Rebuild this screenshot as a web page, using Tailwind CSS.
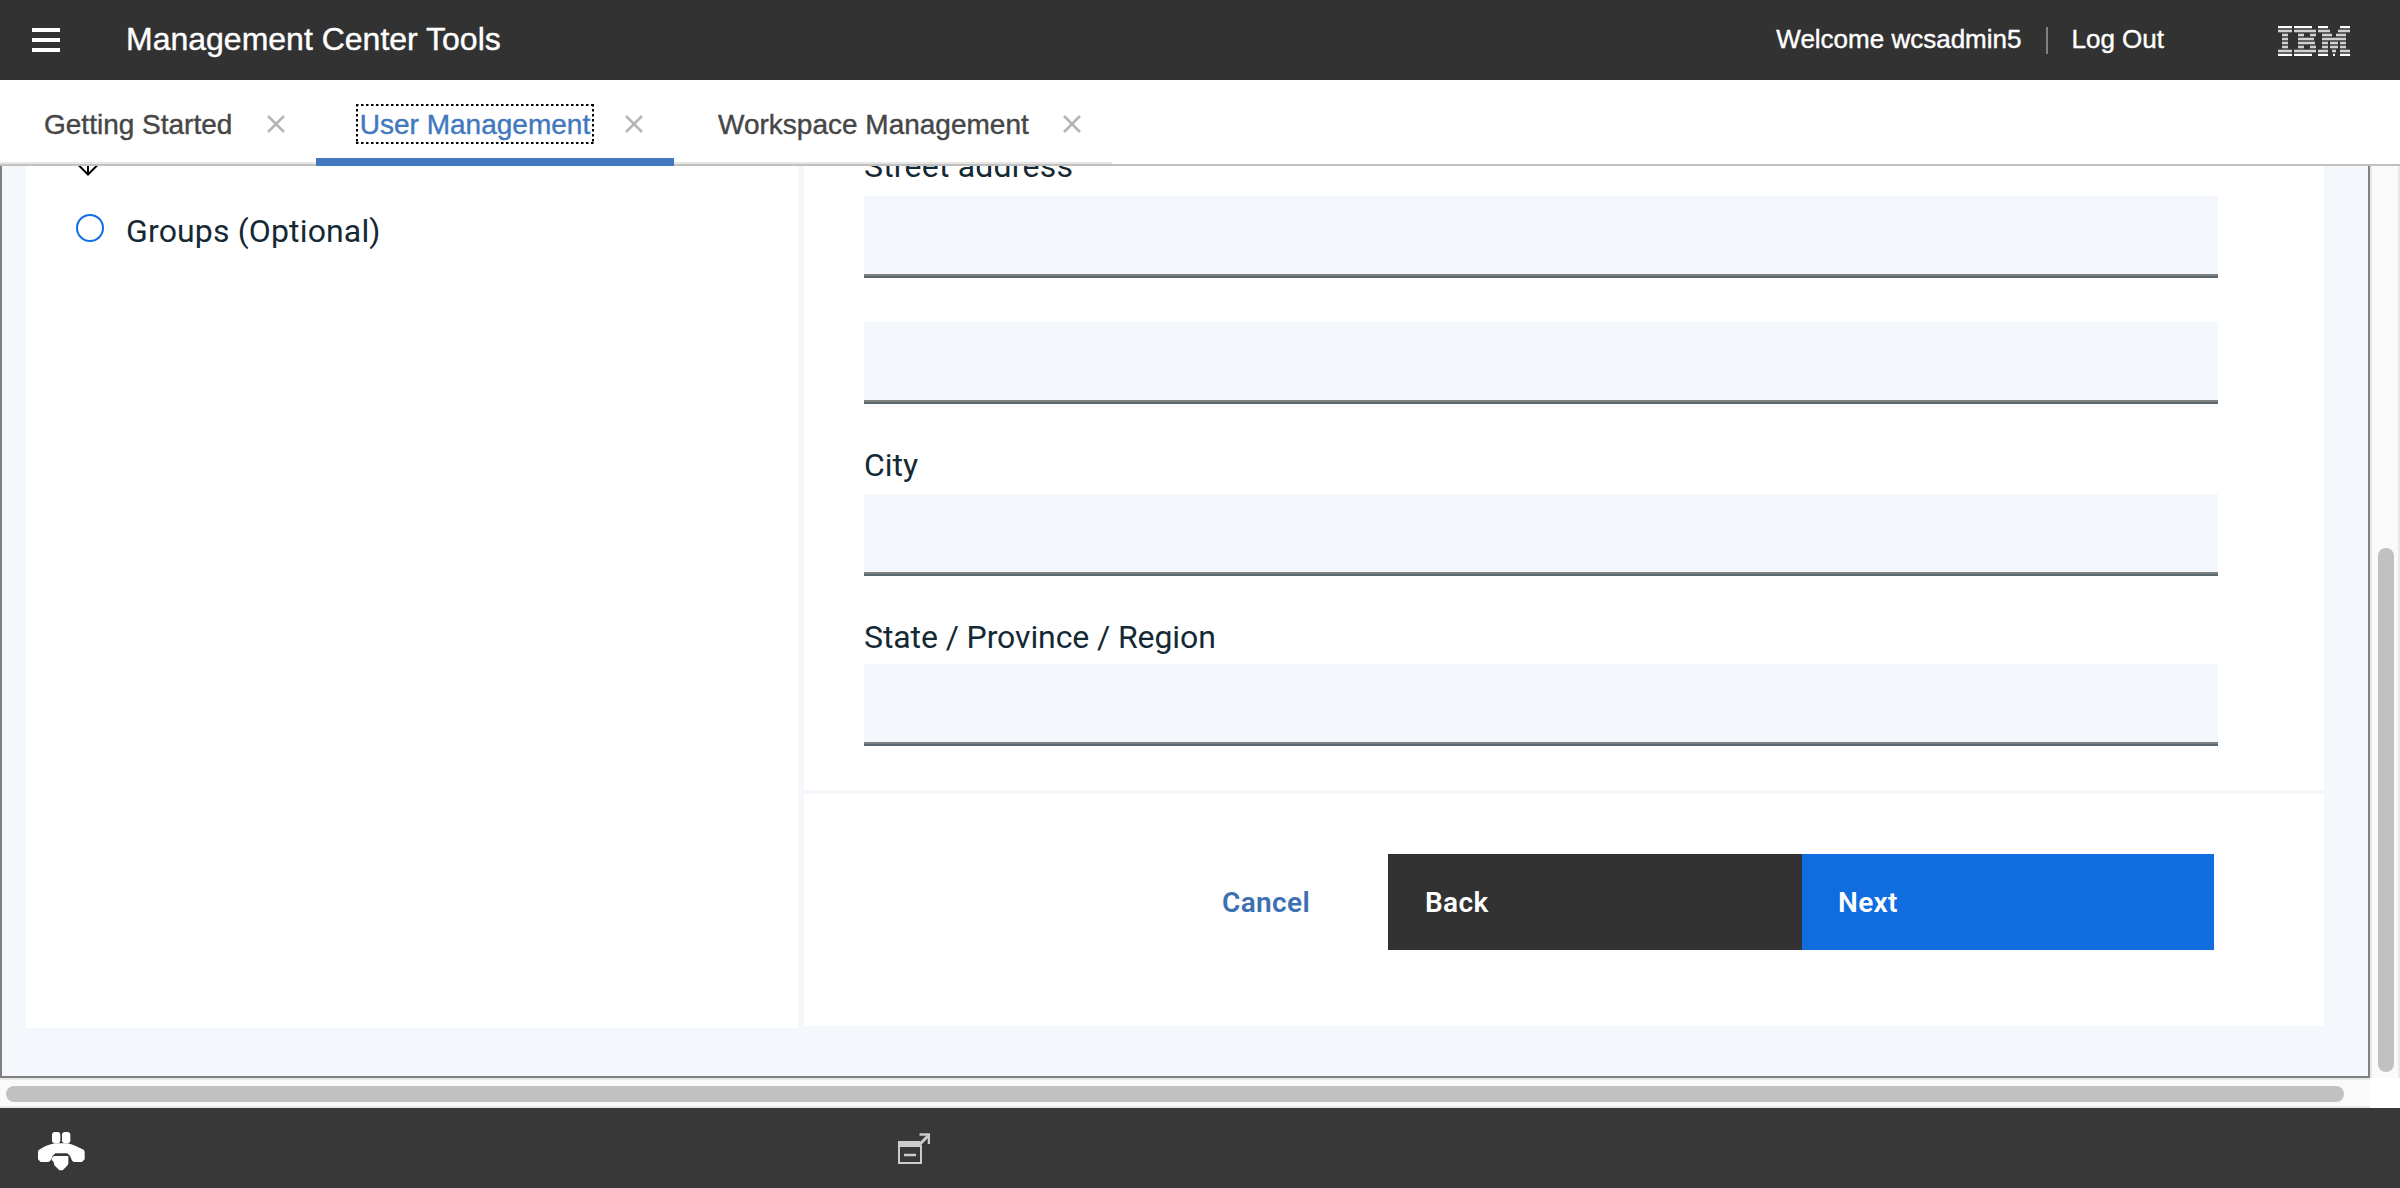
<!DOCTYPE html>
<html lang="en">
<head>
<meta charset="utf-8">
<title>Management Center Tools</title>
<script src="https://cdn.jsdelivr.net/npm/@tailwindcss/browser@4"></script>
</head>
<body class="w-[2400px] h-[1188px] overflow-hidden flex flex-col bg-white font-['Liberation_Sans',sans-serif]">
  <header class="h-20 shrink-0 bg-[#323232] text-white flex items-center [-webkit-text-stroke:0.4px]">
    <svg class="ml-8 w-7 h-6" viewBox="0 0 28 24" fill="#fff"><path d="M0 0h28v4H0zM0 10h28v4H0zM0 20h28v4H0z"/></svg>
    <h1 class="ml-[66px] text-[32px] leading-9 -mt-0.5 whitespace-nowrap">Management Center Tools</h1>
    <div class="ml-auto flex items-center text-[26px] leading-8 whitespace-nowrap">
      <span class="-mt-0.5">Welcome wcsadmin5</span>
      <span class="ml-[25px] w-0.5 h-[27px] bg-[#808080]"></span>
      <a class="ml-[23px] mr-px -mt-0.5">Log Out</a>
    </div>
    <svg class="ml-[113px] mr-[50px] mt-0.5 w-[72px] h-[30px]" viewBox="0 0 72 30" fill="none">
      <defs><path id="stripes" d="M0 1h14M16 1h18M40 1h10M62 1h10M0 5h14M16 5h22M40 5h12M60 5h12M4 9h6M20 9h6M32 9h6M44 9h10M58 9h10M4 13h6M20 13h16M44 13h24M4 17h6M20 17h17M44 17h6M52 17h8M62 17h6M4 21h6M20 21h6M32 21h6M44 21h6M52 21h8M62 21h6M0 25h14M16 25h22M40 25h10M54 25h4M62 25h10M0 29h14M16 29h18M40 29h10M55 29h2M62 29h10"/></defs>
      <use href="#stripes" stroke="#606060" stroke-width="4"/>
      <use href="#stripes" stroke="#d0d0d0" stroke-width="2"/>
      <path d="M0 1h14M16 1h18M40 1h10M62 1h10M0 29h14M16 29h18M40 29h10M55 29h2M62 29h10" stroke="#fff" stroke-width="2"/>
    </svg>
  </header>

  <nav class="h-[86px] shrink-0 border-b-2 border-[#c0c0c0] flex text-[28px] leading-8 text-[#464646] whitespace-nowrap [-webkit-text-stroke:0.4px]">
    <div class="w-[316px] pl-11 flex items-center border-b-2 border-[#e6e6e6]">
      <span class="w-[190px] mt-[7px]">Getting Started</span>
      <svg class="ml-[33px] mt-[6px] w-[18px] h-[18px]" viewBox="0 0 18 18" stroke="#b4b4b4" stroke-width="2.5"><path d="M1 1l16 16M17 1L1 17"/></svg>
    </div>
    <div class="w-[358px] h-[86px] pl-10 flex items-center border-b-8 border-[#4178be] text-[#4178be]">
      <span class="relative mt-[10px] w-[238px] h-10 flex items-center justify-center"><span class="mt-0.5">User Management</span>
        <svg class="absolute inset-0 w-[238px] h-10" viewBox="0 0 238 40" fill="none" stroke="#000" stroke-width="2" stroke-dasharray="2.5 2.500"><path d="M0 1h238M0 39h238M1 0v40M237 0v40"/></svg>
      </span>
      <svg class="ml-[31px] mt-[10px] w-[18px] h-[18px]" viewBox="0 0 18 18" stroke="#b4b4b4" stroke-width="2.5"><path d="M1 1l16 16M17 1L1 17"/></svg>
    </div>
    <div class="w-[438px] pl-11 flex items-center border-b-2 border-[#e6e6e6]">
      <span class="w-[312px] mt-[7px]">Workspace Management</span>
      <svg class="ml-[33px] mt-[6px] w-[18px] h-[18px]" viewBox="0 0 18 18" stroke="#b4b4b4" stroke-width="2.5"><path d="M1 1l16 16M17 1L1 17"/></svg>
    </div>
  </nav>

  <div class="h-[912px] shrink-0 flex">
    <main class="w-[2370px] overflow-hidden border-2 border-t-0 border-[#808080] bg-[#f4f7fc] pl-6 flex items-start gap-1.5 font-[Roboto,sans-serif] text-[32px] leading-10 text-[#152935]">
      <aside class="w-[772px] h-[862px] shrink-0 bg-white">
        <svg class="ml-[51px] w-[22px] h-2.5 block" viewBox="0 0 22 10" fill="none" stroke="#000" stroke-width="2"><path d="M1 -1.5l10 10l10-10M11 -2v10"/></svg>
        <div class="mt-[35px] ml-[50px] flex items-start">
          <span class="mt-[3px] w-7 h-7 rounded-full border-2 border-[#0f6ee6]"></span>
          <span class="ml-[22px] tracking-[0.15px]">Groups (Optional)</span>
        </div>
      </aside>
      <section class="w-[1520px] shrink-0">
        <form class="h-[624px] bg-white pl-[60px] overflow-hidden">
          <label class="block -mt-5 h-[50px] tracking-[0.2px]">Street address</label>
          <div class="w-[1354px] h-[82px] bg-[#f4f7fc] border-b-2 border-[#5a6872] flex items-end"><div class="w-full h-0.5 bg-[#808080]"></div></div>
          <div class="mt-11 w-[1354px] h-[82px] bg-[#f4f7fc] border-b-2 border-[#5a6872] flex items-end"><div class="w-full h-0.5 bg-[#808080]"></div></div>
          <label class="block mt-[41px] h-[49px]">City</label>
          <div class="w-[1354px] h-[82px] bg-[#f4f7fc] border-b-2 border-[#5a6872] flex items-end"><div class="w-full h-0.5 bg-[#808080]"></div></div>
          <label class="block mt-[41px] h-[47px] tracking-[-0.1px]">State / Province / Region</label>
          <div class="w-[1354px] h-[82px] bg-[#f4f7fc] border-b-2 border-[#5a6872] flex items-end"><div class="w-full h-0.5 bg-[#808080]"></div></div>
        </form>
        <div class="mt-1 h-[232px] bg-white flex pt-[60px] pl-[418px] text-[28px] font-semibold leading-[98px] tracking-[0.35px] text-white">
          <a class="w-[166px] text-[#3d70b2]">Cancel</a>
          <button class="w-[414px] h-24 bg-[#323232] pl-[37px] text-left">Back</button>
          <button class="w-[412px] h-24 bg-[#106de0] pl-9 text-left">Next</button>
        </div>
      </section>
    </main>
    <div class="w-[30px] bg-[#fafafa] border-x-2 border-[#e8e8e8] flex justify-center items-end pb-1.5 pl-0.5">
      <div class="w-4 h-[524px] rounded-full bg-[#c1c1c1]"></div>
    </div>
  </div>
  <div class="h-[30px] w-[2370px] shrink-0 bg-[#fafafa] border-y-2 border-[#e8e8e8] pt-1.5 pl-1.5">
    <div class="w-[2338px] h-4 rounded-full bg-[#c1c1c1]"></div>
  </div>

  <footer class="h-20 shrink-0 bg-[#383838] flex items-start">
    <svg class="ml-[37px] mt-6 w-12 h-[39px]" viewBox="111 456 144 117" fill="#fff">
      <rect x="156" y="456" width="25" height="34" rx="9"/><rect x="186" y="456" width="25" height="34" rx="9"/>
      <path d="M165 490h38c18 4 32 12 45 18q6 2 6 8v22l-8 8h-24q-6-2-8-9-4-12-12-17h-36q-8 5-12 17-3 8-9 9h-23l-8-8v-22q0-6 6-8c13-8 28-15 45-18z"/>
      <path d="M162 528h43v22q0 4-4 8l-13 13h-10l-15-15-2-10-6-6v-6z"/>
    </svg>
    <svg class="ml-[813px] mt-[25px] w-8 h-8" viewBox="0 0 32 32" fill="none" stroke="#ccc">
      <path d="M1 12v18h22V12" stroke-width="2"/><path d="M0 8h22l2 6H0z" fill="#ccc" stroke="none"/><path d="M6 22h12" stroke-width="2.5"/><path d="M22 11l8-8" stroke-width="3"/><path d="M21.500 1.500H31V11" stroke-width="2.500"/>
    </svg>
  </footer>
</body>
</html>
